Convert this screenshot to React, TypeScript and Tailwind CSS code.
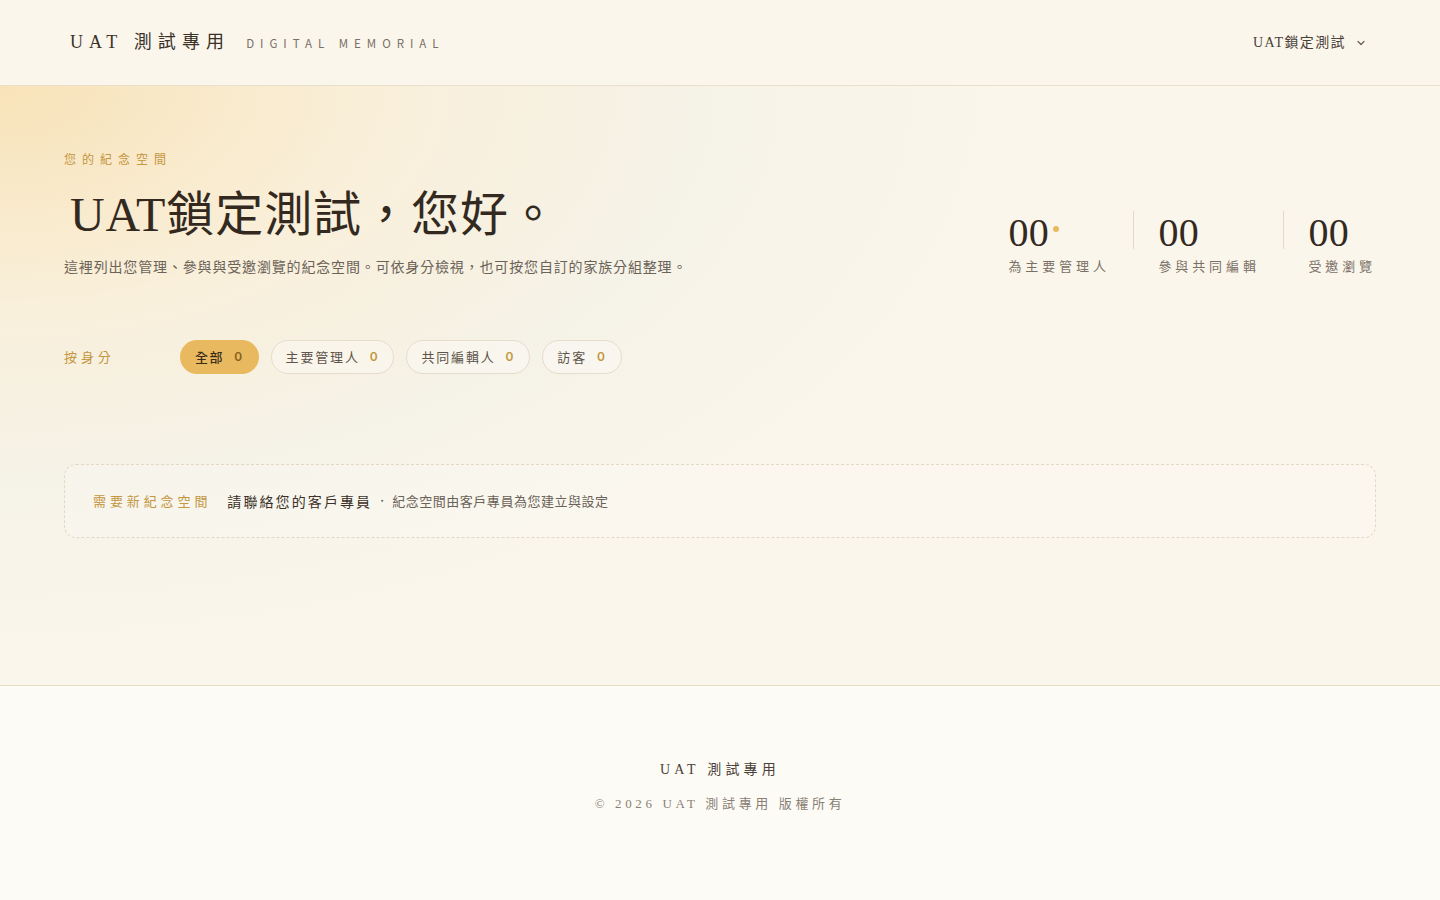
import React from 'react';

const serif = "font-['Liberation_Serif','Noto_Sans_CJK_TC',serif]";
const sans = "font-['Noto_Sans_CJK_TC','Noto_Sans',sans-serif]";

type Stat = { value: string; label: string; dot?: boolean };

const stats: Stat[] = [
  { value: '00', label: '為主要管理人', dot: true },
  { value: '00', label: '參與共同編輯' },
  { value: '00', label: '受邀瀏覽' },
];

type Filter = { label: string; count: number; active?: boolean };

const filters: Filter[] = [
  { label: '全部', count: 0, active: true },
  { label: '主要管理人', count: 0 },
  { label: '共同編輯人', count: 0 },
  { label: '訪客', count: 0 },
];

function Header() {
  return (
    <header className="h-[86px] border-b border-[#eadfca] bg-[#faf6ec] px-16 flex items-center justify-between">
      <div className="flex items-baseline ml-1.5">
        <span className={`${serif} text-[18px] tracking-[0.34em] text-[#3b3128]`}>UAT 測試專用</span>
        <span className={`${sans} ml-4 text-[11.5px] tracking-[0.52em] text-[#7a7066]`}>DIGITAL MEMORIAL</span>
      </div>
      <button className={`${serif} flex items-center gap-2.5 pr-2.5 text-[14px] tracking-[0.1em] text-[#4a4038]`}>
        UAT鎖定測試
        <svg width="10" height="10" viewBox="0 0 10 10" fill="none" stroke="#6b6258" strokeWidth="1.3">
          <path d="M2 3.5 L5 6.5 L8 3.5" strokeLinecap="round" strokeLinejoin="round" />
        </svg>
      </button>
    </header>
  );
}

function Stats() {
  return (
    <div className="flex items-start">
      {stats.map((s, i) => (
        <React.Fragment key={s.label}>
          {i > 0 && <div className="w-px h-[38px] bg-[#e4d9c4] mx-6" />}
          <div className={i < stats.length - 1 ? 'w-[101px]' : ''}>
            <div className={`${serif} relative text-[40px] leading-[44px] text-[#33291f] tracking-[0.01em]`}>
              {s.value}
              {s.dot && <span className="absolute left-[45px] top-[15px] w-[6px] h-[6px] rounded-full bg-[#e8b95e]" />}
            </div>
            <div className={`${sans} mt-px text-[13px] leading-5 tracking-[0.3em] text-[#7a7066] whitespace-nowrap`}>{s.label}</div>
          </div>
        </React.Fragment>
      ))}
    </div>
  );
}

function FilterRow() {
  return (
    <div className="mt-16 flex items-center">
      <span className={`${sans} w-[116px] text-[13px] tracking-[0.3em] text-[#c4963f]`}>按身分</span>
      <div className="flex gap-3">
        {filters.map(f => (
          <button
            key={f.label}
            className={
              f.active
                ? `${sans} h-[34px] px-[15px] rounded-full bg-[#e8b95e] flex items-center gap-2.5 text-[13px] tracking-[0.12em] text-[#3a2d1a] font-medium`
                : `${sans} h-[34px] px-[14px] rounded-full border border-[#e6dccb] bg-white/30 flex items-center gap-2.5 text-[13px] tracking-[0.14em] text-[#5d544a]`
            }
          >
            {f.label}
            <span className={`font-['Inter',sans-serif] font-semibold text-[12px] ${f.active ? 'text-[#8a6320]' : 'text-[#c4963f]'}`}>{f.count}</span>
          </button>
        ))}
      </div>
    </div>
  );
}

export default function App() {
  return (
    <div className="min-h-screen bg-[#fdfbf6]">
      <Header />
      <main className="bg-[#faf6ec] bg-[image:radial-gradient(ellipse_1000px_560px_at_0%_0%,rgba(247,214,150,0.6)_0%,rgba(247,225,180,0.3)_40%,rgba(240,238,226,0.5)_70%,transparent_100%)] px-16 pt-16 pb-[147px]">
        <div className="flex items-end justify-between">
          <div>
            <p className={`${sans} text-[12px] leading-[18px] tracking-[0.5em] text-[#c4963f]`}>您的紀念空間</p>
            <h1 className={`${serif} mt-[18px] ml-1.5 text-[48px] leading-[58px] tracking-[0.02em] text-[#33291f]`}>UAT鎖定測試，您好。</h1>
            <p className={`${sans} mt-3 text-[14px] leading-5 tracking-[0.06em] text-[#6b6258]`}>
              這裡列出您管理、參與與受邀瀏覽的紀念空間。可依身分檢視，也可按您自訂的家族分組整理。
            </p>
          </div>
          <Stats />
        </div>
        <FilterRow />
        <div className="mt-[90px] h-[74px] rounded-xl border border-dashed border-[#e2d8c4] bg-white/20 px-7 flex items-center">
          <span className={`${sans} text-[13px] tracking-[0.3em] text-[#c4963f]`}>需要新紀念空間</span>
          <span className={`${sans} ml-4 text-[14px] tracking-[0.15em] text-[#3b3128]`}>請聯絡您的客戶專員</span>
          <span className="mx-1 text-[12px] text-[#6b6258]">・</span>
          <span className={`${sans} text-[13px] tracking-[0.04em] text-[#6b6258]`}>紀念空間由客戶專員為您建立與設定</span>
        </div>
      </main>
      <footer className="border-t border-[#e6dcc8] bg-[#fdfbf6] pt-[74px] pb-[87px] flex flex-col items-center">
        <p className={`${serif} text-[14px] leading-5 tracking-[0.3em] text-[#4a4038]`}>UAT 測試專用</p>
        <p className={`${serif} mt-[14px] text-[13px] leading-5 tracking-[0.28em] text-[#8a8175]`}>© 2026 UAT 測試專用 版權所有</p>
      </footer>
    </div>
  );
}
